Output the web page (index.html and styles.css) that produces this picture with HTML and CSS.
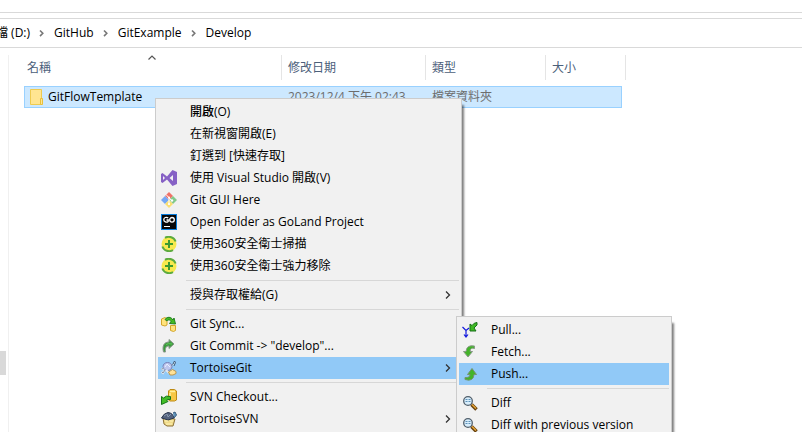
FILE: index.html
```
<!DOCTYPE html>
<html lang="zh-Hant">
<head>
<meta charset="utf-8">
<title>Develop</title>
<link rel="stylesheet" href="styles.css">
</head>
<body>
<svg class="defs" aria-hidden="true">
  <symbol id="chev" viewBox="0 0 16 16"><path d="M6 4.500 9.500 8 6 11.500" fill="none" stroke="currentColor" stroke-width="1.300"/></symbol>
  <symbol id="crumb" viewBox="0 0 16 16"><path d="M6 5.500 8.800 8.300 6 11.100" fill="none" stroke="#777" stroke-width="1.600"/></symbol>
  <symbol id="folder" viewBox="0 0 16 16"><path d="M2.500.500h11v15h-11z" fill="#ffe591" stroke="#eecb4f"/><path d="M12.500 9.500h2v6h-2z" fill="#ffe591" stroke="#e8c03c"/></symbol>
  <symbol id="vs" viewBox="0 0 16 16"><path fill-rule="evenodd" fill="#8661c5" d="M0 4 1.500 3 6 6.500 11.500 0 16 2V14L11.500 16 6 9.500 1.500 13 0 12ZM2 6V10L4 8ZM12 5 8.500 8 12 11Z"/></symbol>
  <symbol id="git" viewBox="0 0 16 16"><path d="M8 0 12 4 8 8 4 4Z" fill="#f07167"/><path d="M4 4 8 8 4 12 0 8Z" fill="#75a7f5"/><path d="M12 4 16 8 12 12 8 8Z" fill="#82c98b"/><path d="m8 8 4 4-4 4-4-4Z" fill="#fbdf72"/><path d="M5 2.500 11 9M8 6v7" stroke="#fff"/><circle cx="8" cy="5.500" r="1" fill="#fff"/><circle cx="11" cy="8.500" r="1.200" fill="#fff"/><circle cx="8" cy="12" r="1" fill="#fff"/></symbol>
  <symbol id="goland" viewBox="0 0 16 16"><path d="M0 0h16v16H0z" fill="#087cdc"/><path d="M1 1h14v14H1z" fill="#080808"/><path d="M7.200 4C5.500 2.600 2.800 3.500 2.800 5.700S5.600 8.800 7.200 7.400V6H5.500" fill="none" stroke="#fff" stroke-width="1.300"/><circle cx="11" cy="5.800" r="2.300" fill="none" stroke="#fff" stroke-width="1.300"/><path d="M3 12h6v1H3z" fill="#fff"/></symbol>
  <symbol id="s360" viewBox="0 0 16 16"><circle cx="8" cy="8" r="7.500" fill="#f7e94e"/><path d="M4 1.800C8-.3 13 1 14.600 5.500M12 14.200C8 16.300 3 15 1.400 10.500" fill="none" stroke="#5cab3e" stroke-width="2"/><path d="M4 8h8M8 4v8" stroke="#3b9a30" stroke-width="2"/></symbol>
  <symbol id="sync" viewBox="0 0 16 16"><path d="M.5 3 4 1.500 6 3v6L4 10 .5 9Z" fill="#ffe37d" stroke="#d3a52c"/><path d="M9.500 9.500h5v5l-2 1-3-1Z" fill="#ffe37d" stroke="#d3a52c"/><path d="M4 3.500C6 .5 10 .5 12 4l1-2 1.500 6-6-.5 1.500-2C8.500 3 7 4 6 5Z" fill="#42bb24" stroke="#218020"/></symbol>
  <symbol id="commit" viewBox="0 0 16 16"><path d="M2.500 14C1 8 3 4 8 4V1.500L13 6 8 10.500V8C5 8 4 10 4.500 14Z" fill="#3c9b3e" stroke="#8a968a"/><path d="M5 6.500Q7 5 11 6" stroke="#62ca58" fill="none"/></symbol>
  <symbol id="tgit" viewBox="0 0 16 16"><ellipse cx="6.500" cy="6.500" rx="4.500" ry="4" fill="#bdc6ed" stroke="#7680b7"/><path d="M2.500 8.500.5 9.500M4 10 2 13l-1.500-1M5 10l3 3" stroke="#e0e6ec" stroke-width="2" fill="none"/><path d="m10 6 3-3M2.500 8.500.5 9M4 10 2 13l-1-1" stroke="#8490a5" fill="none"/><path d="m12 4 1.500-3 1 1.500L13 6" fill="#c9e4f5" stroke="#405876"/><path d="m4 7 2-3 3 3" fill="none" stroke="#e9edff"/><path d="m7.500 12 4-2.500 3.500 2v2L12 15H9z" fill="#ffe298" stroke="#bd974a"/></symbol>
  <symbol id="svnco" viewBox="0 0 16 16"><path d="M7.500 2 9 .5h4.500l2 1.500v9l-2 1H9l-1.500-1Z" fill="#f7c744" stroke="#bd8a14"/><path d="M9 2.500h5M9 4v6" stroke="#fff09d" stroke-width="1.500"/><path d="M9.500 7.500v3Q6 10 5.500 11L7 12.500.5 15.500V7.500L2.500 9Q5 6 9.500 7.500Z" fill="#42bd26" stroke="#167419"/></symbol>
  <symbol id="tsvn" viewBox="0 0 16 16"><path d="M2 7 3 13l3 2h6l2-7Z" fill="#f1dc8a" stroke="#8d7137"/><path d="M.5 7Q3 2 7 1.500 12 2 13 7L7 9Z" fill="#53617d" stroke="#29354d"/><path d="m3 5 3-2 1 3 3-3" stroke="#8797ae" fill="none"/><path d="m12 2 2-1 1.500 3L13 7" fill="#6093bb" stroke="#385b7c"/><path d="M4 10h3m2 0h3M5 13h6" stroke="#fff2b7"/></symbol>
  <symbol id="pull" viewBox="0 0 16 16"><path d="m.5 5 3.500 3.500L7 6M4 8v7m-2-2.500 2 2.500 2-2.500" fill="none" stroke="#1118dd" stroke-width="1.200"/><path d="m8 2 2 1.500Q12 .5 15 .5V3l-3 3 2 3H8Z" fill="#40b824" stroke="#167119"/></symbol>
  <symbol id="fetch" viewBox="0 0 16 16"><path d="M12.500 4.500Q8.500 3 8 7.500h2.500L6 13 1.500 7.500H4Q4.500.5 12.500 2Z" fill="#43b429" stroke="#899988"/></symbol>
  <symbol id="push" viewBox="0 0 16 16"><path d="M3 13.500Q11.500 16 12 8.500h2.500L10 2.500 5.500 8.500H8Q8 12 3 11.500Z" fill="#43b429" stroke="#75936f"/></symbol>
  <symbol id="diff" viewBox="0 0 16 16"><path d="m9.500 9.500 5 5" stroke="#67410d" stroke-width="3.500"/><path d="m10 9.500 4 4" stroke="#e9a739" stroke-width="1.500"/><circle cx="6" cy="6" r="4.300" fill="#d8eefc" stroke="#515f6b" stroke-width="1.300"/><path d="M3.500 4.500h2m1 0h2M3.500 6.500h2m1 0h2" stroke="#5d91b8"/></symbol>
</svg>
<div class="ribbon"></div>
<nav class="address" aria-label="路徑">
  <a class="drive" href="#">檔 (D:)</a><svg class="icon"><use href="#crumb"/></svg>
  <a href="#">GitHub</a><svg class="icon"><use href="#crumb"/></svg>
  <a href="#">GitExample</a><svg class="icon"><use href="#crumb"/></svg>
  <a href="#">Develop</a>
</nav>
<div class="content">
  <div class="pane"><div class="thumb"></div></div>
  <main class="files">
    <table>
      <colgroup><col class="c-name"><col class="c-date"><col class="c-type"><col class="c-size"></colgroup>
      <thead><tr><th>名稱<svg class="sort" viewBox="0 0 8 5"><path d="M.5 4.500 4 1l3.500 3.500" fill="none" stroke="#555" stroke-width="1.200"/></svg></th><th>修改日期</th><th>類型</th><th>大小</th></tr></thead>
      <tbody><tr><td><span class="file"><svg class="icon"><use href="#folder"/></svg>GitFlowTemplate</span></td><td>2023/12/4 下午 02:43</td><td>檔案資料夾</td><td></td></tr></tbody>
    </table>
  </main>
</div>
<div class="menu context">
  <button class="item default">開啟(O)</button>
  <button class="item">在新視窗開啟(E)</button>
  <button class="item">釘選到 [快速存取]</button>
  <button class="item"><svg class="icon"><use href="#vs"/></svg>使用 Visual Studio 開啟(V)</button>
  <button class="item"><svg class="icon"><use href="#git"/></svg>Git GUI Here</button>
  <button class="item"><svg class="icon"><use href="#goland"/></svg>Open Folder as GoLand Project</button>
  <button class="item"><svg class="icon"><use href="#s360"/></svg>使用360安全衛士掃描</button>
  <button class="item"><svg class="icon"><use href="#s360"/></svg>使用360安全衛士強力移除</button>
  <hr>
  <button class="item">授與存取權給(G)<svg class="icon more"><use href="#chev"/></svg></button>
  <hr>
  <button class="item"><svg class="icon"><use href="#sync"/></svg>Git Sync...</button>
  <button class="item"><svg class="icon"><use href="#commit"/></svg>Git Commit -&gt; "develop"...</button>
  <button class="item active"><svg class="icon"><use href="#tgit"/></svg>TortoiseGit<svg class="icon more"><use href="#chev"/></svg></button>
  <hr>
  <button class="item"><svg class="icon"><use href="#svnco"/></svg>SVN Checkout...</button>
  <button class="item"><svg class="icon"><use href="#tsvn"/></svg>TortoiseSVN<svg class="icon more"><use href="#chev"/></svg></button>
  <hr>
</div>
<div class="menu submenu">
  <button class="item"><svg class="icon"><use href="#pull"/></svg>Pull...</button>
  <button class="item"><svg class="icon"><use href="#fetch"/></svg>Fetch...</button>
  <button class="item active"><svg class="icon"><use href="#push"/></svg>Push...</button>
  <hr>
  <button class="item"><svg class="icon"><use href="#diff"/></svg>Diff</button>
  <button class="item"><svg class="icon"><use href="#diff"/></svg>Diff with previous version</button>
</div>
</body>
</html>
```
FILE: styles.css
```
* { box-sizing: border-box; }
body {
  margin: 0;
  height: 100vh;
  display: flex;
  flex-direction: column;
  position: relative;
  overflow: hidden;
  background: #fff;
  color: #000;
  font: 12px/20px "Open Sans", "Noto Sans CJK TC", sans-serif;
}
.defs { position: absolute; width: 0; height: 0; }
.icon { width: 16px; height: 16px; flex: none; }
.ribbon { height: 13px; flex: none; border-bottom: 1px solid #d9d9d9; }
.address {
  display: flex;
  align-items: center;
  gap: 4px;
  flex: none;
  height: 30px;
  margin-top: 5px;
  border: solid #d9d9d9;
  border-width: 1px 0;
}
.address a { color: #000; text-decoration: none; white-space: nowrap; }
.drive { margin-left: -4px; }
.content { display: flex; flex: 1; padding-top: 7px; min-height: 0; }
.pane { width: 9px; border-right: 1px solid #f0f0f0; }
.thumb { width: 6px; height: 24px; margin-top: 296px; background: #d9d9d9; }
.files { flex: 1; padding-left: 15px; }
table { table-layout: fixed; width: 598px; border-collapse: separate; border-spacing: 0; }
.c-name { width: 258px; }
.c-date { width: 144px; }
.c-type { width: 120px; }
th {
  position: relative;
  height: 25px;
  padding: 0 6px;
  border-right: 1px solid #e5e5e5;
  color: #4c607a;
  font-weight: 400;
  text-align: left;
}
th:first-child { padding-left: 3px; }
th:last-child { border-right: 0; }
th:last-child::after { content: ""; position: absolute; top: 0; bottom: 0; right: -4px; width: 1px; background: #e5e5e5; }
.sort { position: absolute; left: 50%; top: 0; width: 8px; height: 5px; margin-left: -5px; }
thead::after { content: ""; display: block; height: 6px; }
td {
  height: 22px;
  padding: 0 6px;
  border: solid #99d1ff;
  border-width: 1px 0;
  background: #cce8ff;
  color: #6d6d6d;
  line-height: 20px;
  white-space: nowrap;
}
td:first-child { padding-left: 3px; border-left-width: 1px; color: #000; }
td:last-child { border-right-width: 1px; }
.file { display: flex; align-items: center; gap: 4px; }
.menu {
  position: absolute;
  padding: 2px;
  border: 1px solid #ccc;
  background: #f1f1f1;
  box-shadow: 4px 5px 2px -2px rgba(0, 0, 0, .5);
}
.context { left: 155px; top: 98px; width: 307px; }
.submenu { left: 456px; top: 316px; width: 216px; }
.item {
  display: flex;
  align-items: center;
  position: relative;
  width: 100%;
  height: 22px;
  padding: 0 0 0 32px;
  border: 0;
  background: none;
  color: #000;
  font: inherit;
  text-align: left;
  white-space: nowrap;
}
.item .icon { position: absolute; left: 3px; top: 3px; }
.item .more { left: auto; right: 3px; color: #333; }
.item.default { font-weight: 500; }
.item.active { background: #91c9f7; }
hr { height: 1px; margin: 3px 0 3px 28px; border: 0; background: #d7d7d7; }
```
